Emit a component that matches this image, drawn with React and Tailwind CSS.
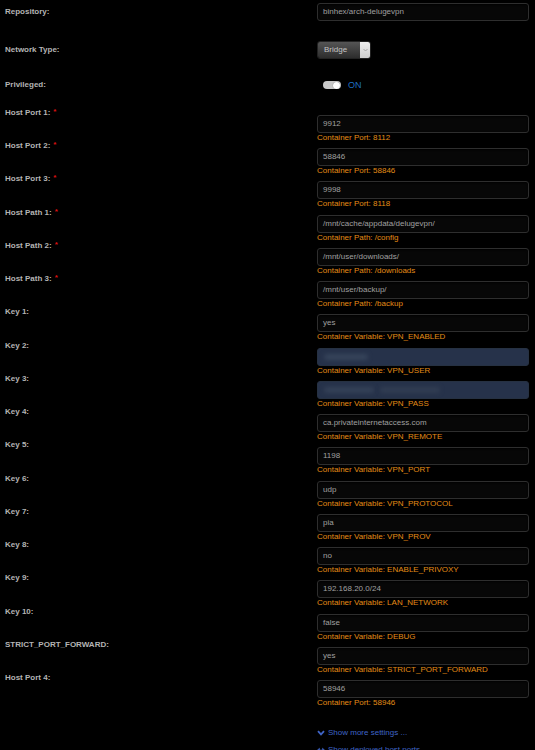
import React from "react";

const rows = [
  { label: "Host Port 1:", req: true, value: "9912", note: "Container Port: 8112" },
  { label: "Host Port 2:", req: true, value: "58846", note: "Container Port: 58846" },
  { label: "Host Port 3:", req: true, value: "9998", note: "Container Port: 8118" },
  { label: "Host Path 1:", req: true, value: "/mnt/cache/appdata/delugevpn/", note: "Container Path: /config" },
  { label: "Host Path 2:", req: true, value: "/mnt/user/downloads/", note: "Container Path: /downloads" },
  { label: "Host Path 3:", req: true, value: "/mnt/user/backup/", note: "Container Path: /backup" },
  { label: "Key 1:", value: "yes", note: "Container Variable: VPN_ENABLED" },
  { label: "Key 2:", masked: "short", note: "Container Variable: VPN_USER" },
  { label: "Key 3:", masked: "long", note: "Container Variable: VPN_PASS" },
  { label: "Key 4:", value: "ca.privateinternetaccess.com", note: "Container Variable: VPN_REMOTE" },
  { label: "Key 5:", value: "1198", note: "Container Variable: VPN_PORT" },
  { label: "Key 6:", value: "udp", note: "Container Variable: VPN_PROTOCOL" },
  { label: "Key 7:", value: "pia", note: "Container Variable: VPN_PROV" },
  { label: "Key 8:", value: "no", note: "Container Variable: ENABLE_PRIVOXY" },
  { label: "Key 9:", value: "192.168.20.0/24", note: "Container Variable: LAN_NETWORK" },
  { label: "Key 10:", value: "false", note: "Container Variable: DEBUG" },
  { label: "STRICT_PORT_FORWARD:", value: "yes", note: "Container Variable: STRICT_PORT_FORWARD" },
  { label: "Host Port 4:", value: "58946", note: "Container Port: 58946" },
];

function Label({ children, req }) {
  return (
    <div className="w-[317px] shrink-0 pl-[5px] text-[8px] font-bold leading-[12px] text-[#b4b4b4]">
      {children}
      {req && <span className="ml-[3px] relative -top-[1px] text-[#d11]">*</span>}
    </div>
  );
}

function TextBox({ value }) {
  return (
    <div className="flex h-[18px] w-[212px] items-center rounded-[3px] border border-[#2e2e2e] bg-[#070707] pl-[5px] text-[8px] text-[#a0a0a0] shadow-[inset_0_1px_2px_rgba(0,0,0,0.8)]">
      {value}
    </div>
  );
}

function MaskedBox({ size }) {
  return (
    <div className="flex h-[18px] w-[212px] items-center gap-[6px] overflow-hidden rounded-[3px] border border-[#263142] bg-[#26324a] pl-[6px] text-[8px]">
      {size === "short" ? (
        <span className="h-[6px] w-[44px] rounded-sm bg-[#36445a] blur-[2px]" />
      ) : (
        <>
          <span className="h-[6px] w-[50px] rounded-sm bg-[#344157] blur-[2px]" />
          <span className="h-[6px] w-[60px] rounded-sm bg-[#313d52] blur-[2px]" />
        </>
      )}
    </div>
  );
}

export default function App() {
  return (
    <div className="h-[750px] w-[535px] overflow-hidden bg-black font-['Liberation_Sans',Arial,sans-serif]">
      {/* general section */}
      <div className="pt-[3px]">
        <div className="flex h-[18px] items-center">
          <Label>Repository:</Label>
          <TextBox value="binhex/arch-delugevpn" />
        </div>

        <div className="mt-[20px] flex h-[18px] items-center">
          <Label>Network Type:</Label>
          <div className="flex h-[18px] w-[54px] overflow-hidden rounded-[3px] border border-[#222] text-[8px]">
            <div className="flex flex-1 items-center bg-gradient-to-b from-[#555] to-[#2d2d2d] pl-[6px] text-[#c4c4c4]">
              Bridge
            </div>
            <div className="flex w-[10px] items-center justify-center bg-gradient-to-b from-[#eee] to-[#cfcfcf]">
              <svg width="5" height="4" viewBox="0 0 5 4">
                <path d="M0.5 1 L2.5 3 L4.5 1" fill="none" stroke="#999" strokeWidth="0.8" />
              </svg>
            </div>
          </div>
        </div>

        <div className="mt-[20px] flex h-[12px] items-center">
          <Label>Privileged:</Label>
          <div className="flex items-center">
            <div className="ml-[6px] flex h-[8px] w-[18px] items-center justify-end rounded-full bg-[#c9c9c9] pr-[1px]">
              <span className="h-[7px] w-[7px] rounded-full bg-white shadow-[0_0_1px_rgba(0,0,0,0.5)]" />
            </div>
            <span className="ml-[7px] text-[9px] leading-none text-[#1f6fc0]">ON</span>
          </div>
        </div>
      </div>

      {/* port, path and variable mappings */}
      <div className="mt-[16px]">
        {rows.map((r) => (
          <div key={r.label} className="flex h-[33.24px]">
            <Label req={r.req}>{r.label}</Label>
            <div className="pt-[8px]">
              {r.masked ? <MaskedBox size={r.masked} /> : <TextBox value={r.value} />}
              <div className="text-[8px] leading-[10px] text-[#e38c16]">{r.note}</div>
            </div>
          </div>
        ))}
      </div>

      {/* extra links */}
      <div className="mt-[22px] pl-[317px] text-[8px] leading-[12px] text-[#3f64c6]">
        <div className="flex items-center">
          <svg width="8" height="6" viewBox="0 0 8 6" className="mr-[3px]">
            <path d="M1 1.2 L4 4.4 L7 1.2" fill="none" stroke="#3f64c6" strokeWidth="1.8" />
          </svg>
          Show more settings ...
        </div>
        <div className="mt-[5px] flex items-center">
          <svg width="8" height="6" viewBox="0 0 8 6" className="mr-[3px]">
            <path d="M0.5 3 L2.5 1.2 L2.5 4.8 Z M7.5 3 L5.5 1.2 L5.5 4.8 Z M2.5 3 H5.5" fill="#3f64c6" stroke="#3f64c6" strokeWidth="0.6" />
          </svg>
          Show deployed host ports ...
        </div>
      </div>
    </div>
  );
}
